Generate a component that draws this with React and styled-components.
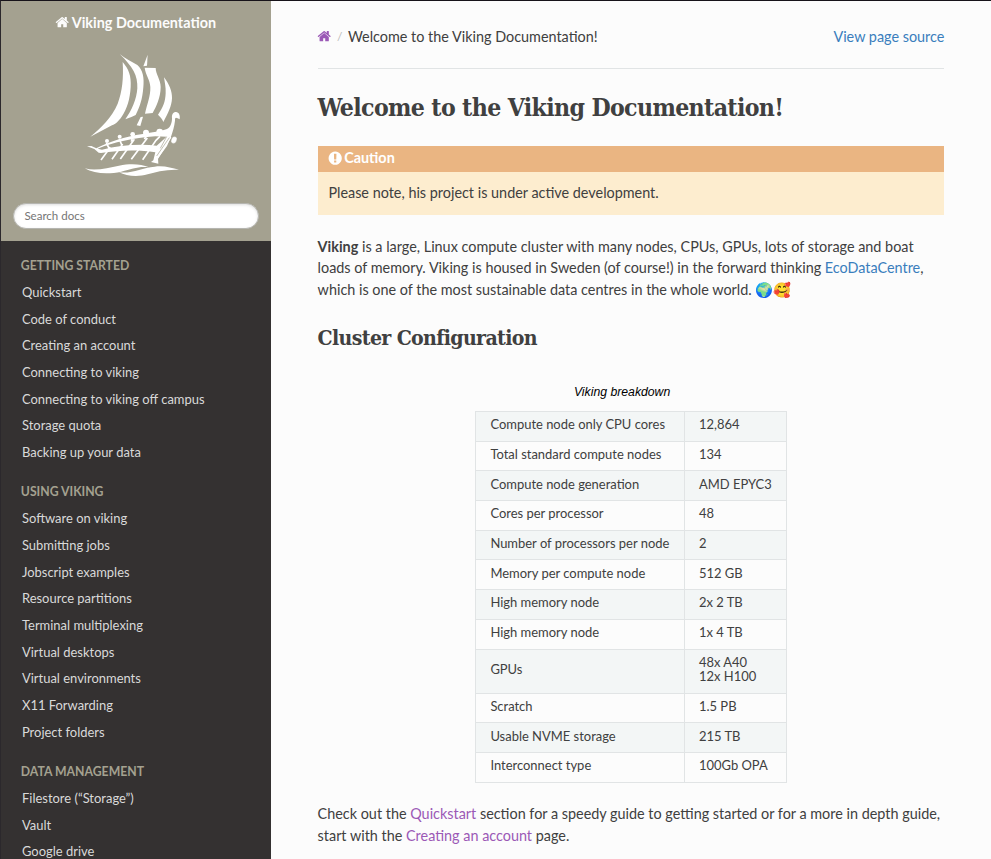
import React from "react";
import styled, { createGlobalStyle } from "styled-components";

const GlobalStyle = createGlobalStyle`
  *, *::before, *::after { box-sizing: border-box; }
  html, body { margin: 0; padding: 0; overflow: hidden; }
  body {
    background: #fcfcfc;
    color: #404040;
    font-family: Lato, "Noto Sans", Arial, sans-serif;
    font-size: 14.4px;
  }
  a { text-decoration: none; }
`;

const Window = styled.div`
  display: flex;
  height: 859px;
  overflow: hidden;
  border-top: 1px solid #17131a;
  border-left: 1px solid #2b282c;
`;

const Sidebar = styled.nav`
  flex: 0 0 270px;
  background: #343131;
  overflow: hidden;
`;

const SidebarHeader = styled.header`
  display: flex;
  flex-direction: column;
  align-items: center;
  height: 240px;
  padding: 10.6px 11.6px 0;
  background: #a4a190;
`;

const BrandLink = styled.a`
  display: flex;
  align-items: center;
  gap: 2.4px;
  height: 21.6px;
  margin-right: 1px;
  color: #fcfcfc;
  font-weight: 700;
`;

const Logo = styled.svg`
  display: block;
  width: 125px;
  height: 140px;
  margin: 11.8px 7px 0 0;
`;

const SearchField = styled.input`
  width: 246px;
  height: 26px;
  margin-top: 18px;
  padding: 0 10.4px;
  border: 1px solid #b5b5b0;
  border-radius: 50px;
  background: #fff;
  box-shadow: inset 0 1px 3px #ddd;
  font: 11.52px Lato, sans-serif;
  outline: none;
  &::placeholder { color: #757575; opacity: 1; }
`;

const MenuCaption = styled.p`
  margin: 10.8px 0 0;
  padding: 0 19.8px;
  height: 27.1px;
  line-height: 28.8px;
  font-size: 12.24px;
  font-weight: 700;
  text-transform: uppercase;
  color: #a4a190;
`;

const MenuList = styled.ul`
  list-style: none;
  margin: 0 0 12.5px;
  padding: 0;
`;

const MenuLink = styled.a`
  display: block;
  padding: 5.24px 20.97px;
  line-height: 16.2px;
  font-size: 12.96px;
  color: #d9d9d9;
`;

const Content = styled.main`
  flex: 0 0 720px;
  padding: 23.3px 46.6px;
`;

const Breadcrumbs = styled.div`
  display: flex;
  align-items: center;
  height: 24px;
  margin-left: -1px;
  line-height: 21.6px;
`;

const Separator = styled.span`
  margin: 0 5.6px 0 6px;
  font-size: 12px;
  color: #bbb;
`;

const SourceLink = styled.a`
  margin-left: auto;
  color: #3a7ebd;
`;

const Rule = styled.hr`
  height: 1px;
  margin: 19.7px 0 21.6px;
  border: 0;
  background: #e1e4e5;
`;

const Heading = styled.h1`
  margin: 0;
  font-family: "Roboto Slab", "DejaVu Serif Condensed", "DejaVu Serif", serif;
  font-stretch: condensed;
  font-weight: 700;
  font-size: 24.6px;
  line-height: 34px;
  letter-spacing: -0.63px;
  white-space: nowrap;
`;

const SubHeading = styled(Heading).attrs({ as: "h2" })`
  margin-top: 21.8px;
  font-size: 21.1px;
  line-height: 29px;
  letter-spacing: -0.65px;
`;

const Admonition = styled.section`
  margin: 21.4px 0 20.7px;
  background: #fdedcf;
`;

const AdmonitionTitle = styled.p`
  display: flex;
  align-items: center;
  gap: 1.4px;
  height: 26px;
  margin: 0;
  padding: 0 10.8px 2px;
  background: #eab582;
  color: #fff;
  font-weight: 700;
`;

const AdmonitionBody = styled.p`
  margin: 0;
  height: 43px;
  padding: 9.8px 10.8px;
  line-height: 21.6px;
`;

const Paragraph = styled.p`
  margin: 0;
  line-height: 21.6px;
`;

const TextLink = styled.a`
  color: ${(p) => (p.$visited ? "#9b59b6" : "#3a7ebd")};
`;

const Emoji = styled.span`
  font-family: "Noto Color Emoji", sans-serif;
`;

const Figure = styled.figure`
  width: 312px;
  margin: 32.8px auto 20.8px 157.2px;
`;

const FigureCaption = styled.figcaption`
  height: 26px;
  padding-right: 17.4px;
  text-align: center;
  color: #000;
  font: italic 12.24px/14px "Liberation Sans", Arial, sans-serif;
`;

const Table = styled.div`
  border: 1px solid #e1e4e5;
  border-top: 0;
`;

const Row = styled.div`
  display: grid;
  grid-template-columns: 208.4px 1fr;
  height: ${(p) => (p.$tall ? "44.1px" : "29.7px")};
  border-top: 1px solid #e1e4e5;
  background: ${(p) => (p.$striped ? "#f3f6f6" : "transparent")};
`;

const Cell = styled.div`
  display: flex;
  align-items: center;
  padding: 0 0 3.8px 14.6px;
  font-size: 12.96px;
  line-height: 14.4px;
  white-space: pre;
  & + & { border-left: 1px solid #e1e4e5; padding-left: 13.8px; }
`;

const Glyph = styled.svg`
  display: block;
  flex: none;
  width: 14.4px;
  height: 14.4px;
  fill: ${(p) => p.$color || "currentColor"};
`;

const HomeIcon = ({ color }) => (
  <Glyph $color={color} viewBox="0 0 1792 1792">
    <path d="M1472 992v480q0 26-19 45t-45 19h-384v-384h-256v384h-384q-26 0-45-19t-19-45v-480q0-1 .5-3t.5-3l575-474 575 474q1 2 1 6zm223-69l-62 74q-8 9-21 11h-3q-13 0-21-7l-692-577-692 577q-12 8-24 7-13-2-21-11l-62-74q-8-10-7-23.5t11-21.5l719-599q32-26 76-26t76 26l244 204v-195q0-14 9-23t23-9h192q14 0 23 9t9 23v408l219 182q10 8 11 21.5t-7 23.5z" />
  </Glyph>
);

const AlertIcon = () => (
  <Glyph viewBox="60 60 1672 1672">
    <path d="M896 128q209 0 385.5 103t279.5 279.5 103 385.5-103 385.5-279.5 279.5-385.5 103-385.5-103-279.5-279.5-103-385.5 103-385.5 279.5-279.5 385.5-103zm128 1247v-190q0-14-9-23.5t-22-9.5h-192q-13 0-23 10t-10 23v190q0 13 10 23t23 10h192q13 0 22-9.5t9-23.5zm-2-344l18-621q0-12-10-18-10-8-24-8h-220q-14 0-24 8-10 6-10 18l17 621q0 10 10 17.5t24 7.5h185q14 0 23.5-7.5t10.5-17.5z" />
  </Glyph>
);

const ShipLogo = () => (
  <Logo viewBox="0 0 375 420" fill="#fff">
    <path d="M158 51C176 72 184 93 182 126C180 162 171 192 155 215C145 229 138 236 126 241L61 275C92 249 126 218 143 176C157 140 161 98 158 51Z" />
    <path d="M151 27C168 42 187 49 204 60C221 75 225 99 222 127C219 164 211 187 199 210Q184 218 168 223C187 197 202 162 204 130C206 91 190 65 151 27Z" transform="translate(-2 0)" />
    <path d="M224 68L257 69C257 88 272 104 272 126C272 158 258 186 248 204L225 206C231 178 242 154 241 126C240 104 227 91 224 68Z" />
    <path d="M282 97C297 116 307 140 306 160C305 184 294 205 280 231C278 222 269 214 264 209C279 189 286 170 287 145C288 126 284 113 282 97Z" />
    <path d="M233 29L231 62L220 64Z" />
    <path d="M212 216L219 215L211 243L200 241Z" />
    <path d="M51 304L64 303L79 310C116 291 164 275 218 267C246 262 273 259 291 252C302 247 306 233 306 220C305 209 309 201 318 201C327 202 331 210 329 223L323 220Q314 214 315 227C313 245 308 260 304 272L291 303L264 340L265 356L243 351L250 346L256 322C208 313 146 315 93 324L86 323L73 312Z" />
    <path fill="#a4a190" d="M83 311C132 292 188 279 256 274L290 275L260 302C209 296 147 301 96 314Z" />
    <path d="M288 277L300 276L279 312L263 333L260 315Z" />
    <g stroke="#fff" strokeWidth="5" fill="none">
      <path d="M109 294L117 309M121 307L93 345M148 282L156 302M158 297L126 343M188 276L184 290M193 283L151 342M228 275L223 282M232 279L184 343M270 274L258 286L218 344M302 276L258 347" />
    </g>
    <g stroke="#a4a190" strokeWidth="2" fill="none">
      <path d="M298 278L260 333M290 275L271 310" />
    </g>
    <circle cx="111" cy="288" r="6" />
    <circle cx="149" cy="275" r="6" />
    <circle cx="188" cy="268" r="7" />
    <circle cx="228" cy="263" r="9" />
    <circle cx="269" cy="261" r="10" />
    <ellipse cx="312" cy="285" rx="8" ry="11" transform="rotate(25 312 285)" stroke="#a4a190" />
    <path d="M44 370C80 380 114 367 147 362C184 354 213 357 237 367C206 363 186 372 154 380C113 389 72 386 44 370Z" />
    <path d="M147 382C188 387 216 367 254 365C282 361 304 369 327 374C296 374 267 377 233 388C202 397 169 393 147 382Z" />
  </Logo>
);

const MENU = [
  {
    caption: "Getting Started",
    items: ["Quickstart", "Code of conduct", "Creating an account", "Connecting to viking", "Connecting to viking off campus", "Storage quota", "Backing up your data"],
  },
  {
    caption: "Using Viking",
    items: ["Software on viking", "Submitting jobs", "Jobscript examples", "Resource partitions", "Terminal multiplexing", "Virtual desktops", "Virtual environments", "X11 Forwarding", "Project folders"],
  },
  {
    caption: "Data Management",
    items: ["Filestore (“Storage”)", "Vault", "Google drive"],
  },
];

const SPECS = [
  ["Compute node only CPU cores", "12,864"],
  ["Total standard compute nodes", "134"],
  ["Compute node generation", "AMD EPYC3"],
  ["Cores per processor", "48"],
  ["Number of processors per node", "2"],
  ["Memory per compute node", "512 GB"],
  ["High memory node", "2x 2 TB"],
  ["High memory node", "1x 4 TB"],
  ["GPUs", "48x A40\n12x H100"],
  ["Scratch", "1.5 PB"],
  ["Usable NVME storage", "215 TB"],
  ["Interconnect type", "100Gb OPA"],
];

export default function App() {
  return (
    <>
      <GlobalStyle />
      <Window>
        <Sidebar>
          <SidebarHeader>
            <BrandLink>
              <HomeIcon />
              Viking Documentation
            </BrandLink>
            <ShipLogo />
            <SearchField placeholder="Search docs" />
          </SidebarHeader>
          {MENU.map((group) => (
            <React.Fragment key={group.caption}>
              <MenuCaption>{group.caption}</MenuCaption>
              <MenuList>
                {group.items.map((item) => (
                  <li key={item}>
                    <MenuLink>{item}</MenuLink>
                  </li>
                ))}
              </MenuList>
            </React.Fragment>
          ))}
        </Sidebar>
        <Content>
          <Breadcrumbs>
            <HomeIcon color="#9b59b6" />
            <Separator>/</Separator>
            <span>Welcome to the Viking Documentation!</span>
            <SourceLink>View page source</SourceLink>
          </Breadcrumbs>
          <Rule />
          <Heading>Welcome to the Viking Documentation!</Heading>
          <Admonition>
            <AdmonitionTitle>
              <AlertIcon />
              Caution
            </AdmonitionTitle>
            <AdmonitionBody>Please note, his project is under active development.</AdmonitionBody>
          </Admonition>
          <Paragraph>
            <b>Viking</b> is a large, Linux compute cluster with many nodes, CPUs, GPUs, lots of storage and boat loads
            of memory. Viking is housed in Sweden (of course!) in the forward thinking <TextLink>EcoDataCentre</TextLink>,
            which is one of the most sustainable data centres in the whole world. <Emoji>🌍🥰</Emoji>
          </Paragraph>
          <SubHeading>Cluster Configuration</SubHeading>
          <Figure>
            <FigureCaption>Viking breakdown</FigureCaption>
            <Table>
              {SPECS.map(([name, value], i) => (
                <Row key={i} $striped={i % 2 === 0} $tall={value.includes("\n")}>
                  <Cell>{name}</Cell>
                  <Cell>{value}</Cell>
                </Row>
              ))}
            </Table>
          </Figure>
          <Paragraph>
            Check out the <TextLink $visited>Quickstart</TextLink> section for a speedy guide to getting started or for a
            more in depth guide, start with the <TextLink $visited>Creating an account</TextLink> page.
          </Paragraph>
        </Content>
      </Window>
    </>
  );
}
